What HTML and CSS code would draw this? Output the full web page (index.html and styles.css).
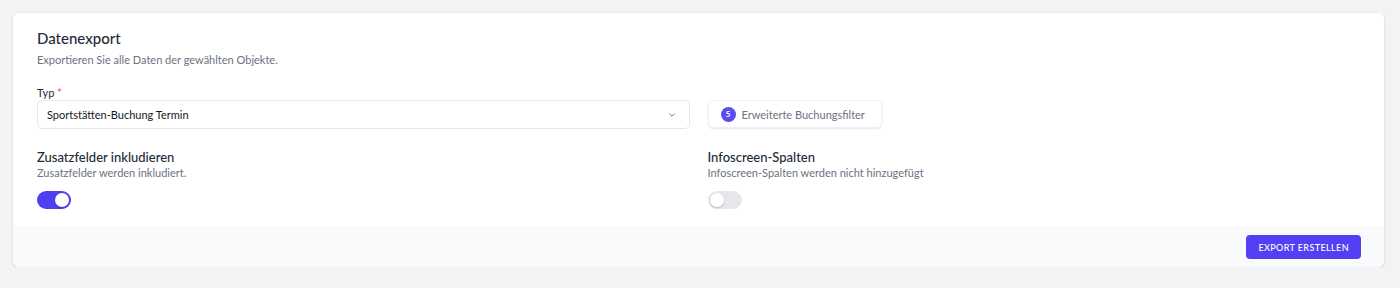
FILE: index.html
```html
<!DOCTYPE html>
<html lang="de">
<head>
    <meta charset="UTF-8">
    <meta name="viewport" content="width=device-width, initial-scale=1.0">
    <title>Datenexport</title>
    <link rel="stylesheet" href="styles.css">
</head>
<body>
    <div class="card">
        <div class="card-body">
            <h2 class="title">Datenexport</h2>
            <p class="subtitle">Exportieren Sie alle Daten der gewählten Objekte.</p>

            <div class="grid">
                <div class="field">
                    <label class="label">Typ <span class="required">*</span></label>
                    <div class="select">
                        <span>Sportstätten-Buchung Termin</span>
                        <svg class="chevron" width="12" height="12" viewBox="0 0 20 20" fill="none" stroke="currentColor" stroke-width="1.6" stroke-linecap="round" stroke-linejoin="round"><path d="M6 8l4 4 4-4"/></svg>
                    </div>
                </div>
                <div class="field filter-cell">
                    <button class="filter-btn"><span class="badge">5</span>Erweiterte Buchungsfilter</button>
                </div>

                <div class="toggle-block">
                    <h3 class="toggle-title">Zusatzfelder inkludieren</h3>
                    <p class="toggle-desc">Zusatzfelder werden inkludiert.</p>
                    <span class="switch on"><span class="knob"></span></span>
                </div>
                <div class="toggle-block">
                    <h3 class="toggle-title">Infoscreen-Spalten</h3>
                    <p class="toggle-desc">Infoscreen-Spalten werden nicht hinzugefügt</p>
                    <span class="switch"><span class="knob"></span></span>
                </div>
            </div>
        </div>
        <div class="card-footer">
            <button class="primary-btn">EXPORT ERSTELLEN</button>
        </div>
    </div>
</body>
</html>
```

FILE: styles.css
```css
body {
    font-family: Lato, 'Open Sans', sans-serif;
    margin: 0;
    padding: 13px 16px 0 13px;
    background-color: #f2f3f5;
    color: #1f2937;
}
.card {
    background-color: #fff;
    border-radius: 6px;
    box-shadow: 0 1px 3px rgba(0,0,0,0.12), 0 1px 2px rgba(0,0,0,0.06);
    overflow: hidden;
}
.card-body {
    padding: 15px 24px 17px;
}
.title {
    font-size: 15px;
    font-weight: 500;
    margin: 0;
    line-height: 20px;
    color: #1f2937;
}
.subtitle {
    font-size: 11px;
    color: #6b7280;
    margin: 4px 0 0;
    line-height: 16px;
}
.grid {
    display: grid;
    grid-template-columns: 1fr 1fr;
    column-gap: 18px;
    margin-top: 17px;
}
.label {
    display: block;
    font-size: 11px;
    line-height: 16px;
    color: #1f2937;
    margin-bottom: -1px;
}
.required {
    color: #ef4444;
}
.select {
    display: flex;
    align-items: center;
    justify-content: space-between;
    height: 29px;
    box-sizing: border-box;
    padding: 0 11px 0 9px;
    border: 1px solid #e5e7eb;
    border-radius: 5px;
    font-size: 11px;
    color: #111827;
}
.chevron {
    color: #6b7280;
}
.filter-cell {
    display: flex;
    align-items: flex-start;
    padding-top: 15px;
}
.filter-btn {
    display: flex;
    align-items: center;
    gap: 6px;
    height: 28px;
    padding: 0 16px 0 12px;
    background: #fff;
    border: 1px solid #f0f1f3;
    border-radius: 5px;
    box-shadow: 0 1px 2px rgba(0,0,0,0.1);
    font-family: inherit;
    font-size: 11px;
    color: #6b7280;
}
.badge {
    display: inline-flex;
    align-items: center;
    justify-content: center;
    width: 15px;
    height: 15px;
    border-radius: 50%;
    background-color: #5b4cf0;
    color: #fff;
    font-size: 8px;
    font-weight: 700;
}
.toggle-block {
    padding-top: 20px;
}
.toggle-title {
    font-size: 13px;
    font-weight: 500;
    margin: 0;
    line-height: 16px;
    color: #1f2937;
}
.toggle-desc {
    font-size: 11px;
    color: #6b7280;
    margin: 0;
    line-height: 16px;
}
.switch {
    display: flex;
    align-items: center;
    margin-top: 10px;
    width: 34px;
    height: 18px;
    box-sizing: border-box;
    padding: 2px;
    border-radius: 9px;
    background-color: #e5e7eb;
}
.switch.on {
    background-color: #4f3ef2;
    justify-content: flex-end;
}
.knob {
    width: 14px;
    height: 14px;
    border-radius: 50%;
    background: #fff;
    box-shadow: 0 1px 2px rgba(0,0,0,0.2);
}
.card-footer {
    display: flex;
    justify-content: flex-end;
    background-color: #f9fafb;
    padding: 9px 23px 8px;
}
.primary-btn {
    height: 24px;
    padding: 0 12px;
    background-color: #5340f5;
    color: #fff;
    border: none;
    border-radius: 4px;
    font-family: inherit;
    font-size: 9px;
    letter-spacing: 0.4px;
    font-weight: 500;
}
```
